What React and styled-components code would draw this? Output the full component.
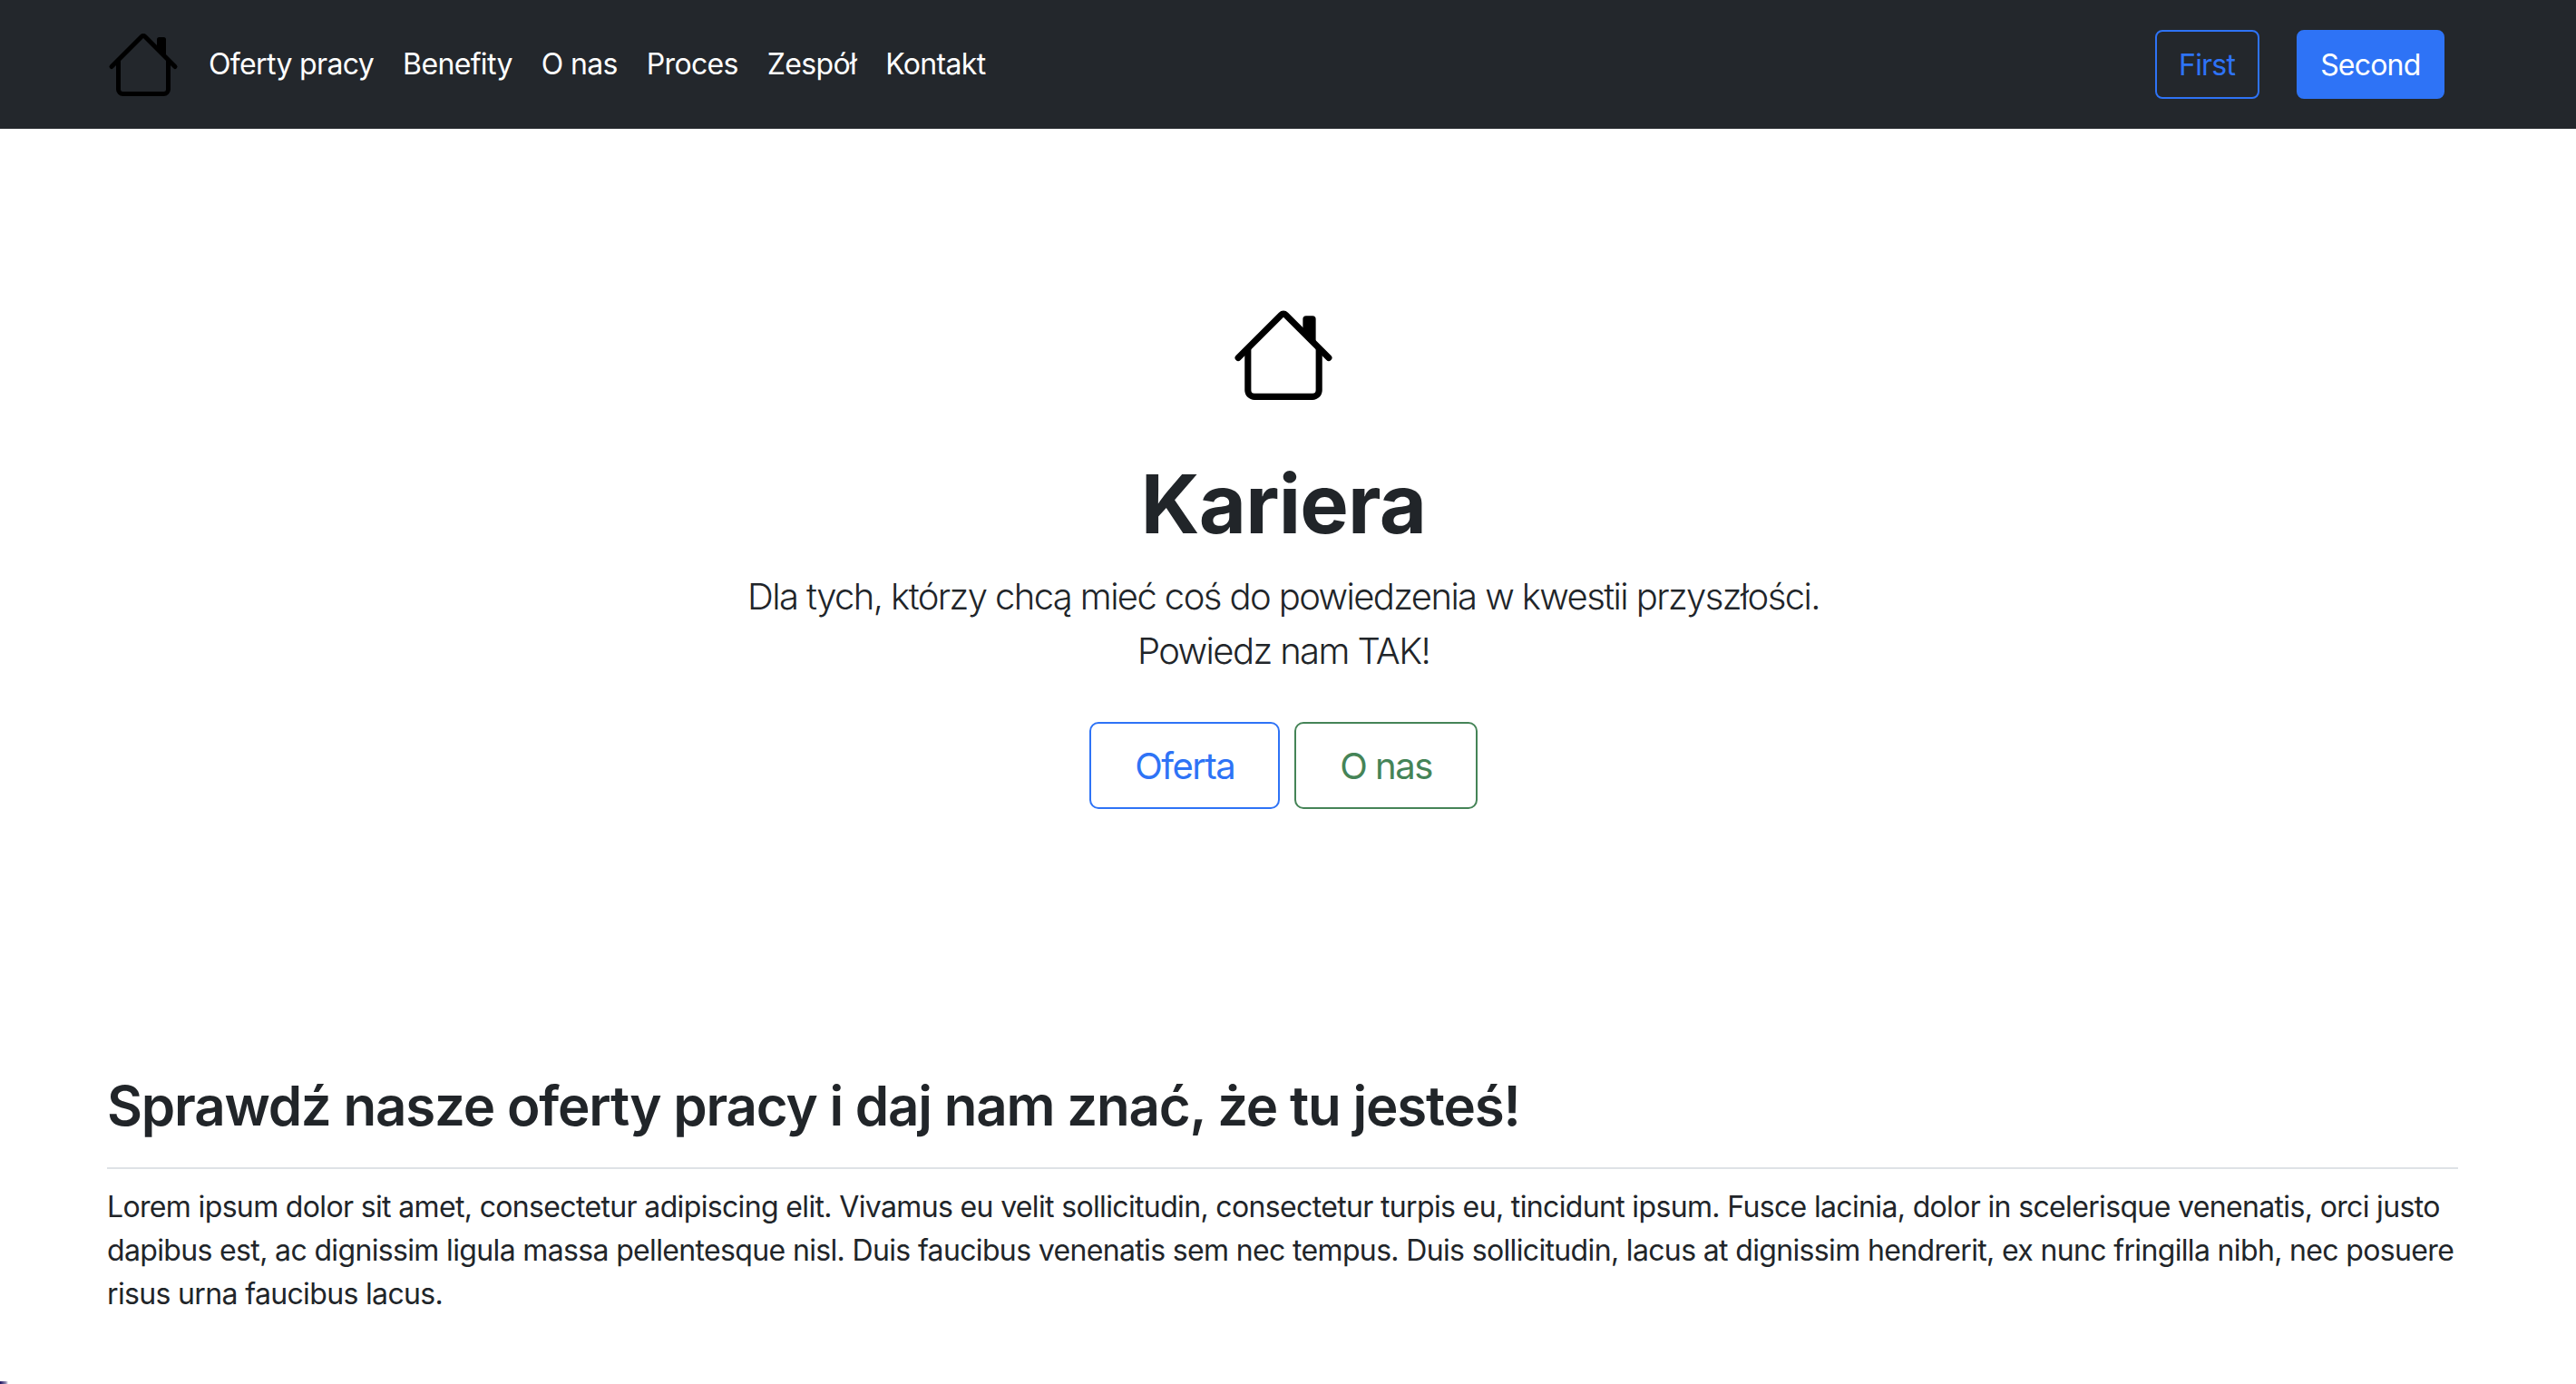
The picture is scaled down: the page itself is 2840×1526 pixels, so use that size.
import React from "react";
import styled, { createGlobalStyle } from "styled-components";

const Global = createGlobalStyle`
  html, body { margin: 0; padding: 0; background: #fff; }
  body { font-family: Inter, "Liberation Sans", sans-serif; color: #212529; }
  * { box-sizing: border-box; }
`;
const Page = styled.div`position: relative; width: 2840px; height: 1526px; overflow: hidden; background: #fff;`;
const Navbar = styled.header`
  height: 142px; background: #23272c; display: flex; align-items: center; justify-content: space-between;
  padding: 0 145px 0 118px;
`;
const NavLeft = styled.div`display: flex; align-items: center; gap: 32px;`;
const Brand = styled.div`display: flex; width: 80px; height: 80px; color: #000;`;
const NavLinks = styled.nav`display: flex; gap: 32px;`;
const NavLink = styled.a`font-size: 32px; line-height: 48px; color: #fff; letter-spacing: -0.65px;`;
const NavActions = styled.div`display: flex; gap: 41px;`;
const NavButton = styled.button`
  height: 76px; padding: 0 24.5px; border-radius: 8px; font: inherit; font-size: 32px; letter-spacing: -0.8px;
  border: 2px solid #2e73f6; color: ${p => p.$solid ? "#fff" : "#2e73f6"};
  background: ${p => p.$solid ? "#2e73f6" : "transparent"};
`;
const Hero = styled.section`display: flex; flex-direction: column; align-items: center; padding: 192px 129px 0 119px;`;
const HeroIcon = styled.div`display: flex; width: 114px; height: 114px; color: #000;`;
const Title = styled.h1`margin: 54px 0 0; font-size: 90px; line-height: 108px; font-weight: 700; letter-spacing: -0.8px;`;
const Lead = styled.p`margin: 18px 0 0; font-size: 40px; line-height: 60px; font-weight: 300; text-align: center; letter-spacing: -1.6px;`;
const HeroActions = styled.div`display: flex; gap: 16px; margin-top: 48px;`;
const HeroButton = styled.button`
  height: 96px; padding: 0 48px; border-radius: 10px; background: #fff; font: inherit; font-size: 40px; letter-spacing: -1.5px;
  color: ${p => p.$color}; border: 2px solid ${p => p.$color};
`;
const Section = styled.section`padding: 0 130px 0 118px; margin-top: 291px;`;
const Heading = styled.h2`margin: 0; font-size: 60px; line-height: 72px; font-weight: 600; letter-spacing: -1.2px;`;
const Divider = styled.hr`margin: 32px 0 0; border: 0; border-top: 2px solid #dee2e6;`;
const Body = styled.p`margin: 18px 0 0; font-size: 32px; line-height: 48px; letter-spacing: -0.65px;`;
const CornerMark = styled.div`
  position: absolute; left: 0; bottom: 0; width: 9px; height: 3px;
  background: linear-gradient(90deg, #1c1060, #8f8bb0 70%, transparent);
`;

const House = () => (
  <svg width="100%" height="100%" viewBox="0 0 16 16" fill="currentColor">
    <path fillRule="evenodd" d="M2 13.5V7h1v6.5a.5.5 0 0 0 .5.5h9a.5.5 0 0 0 .5-.5V7h1v6.5a1.5 1.5 0 0 1-1.5 1.5h-9A1.5 1.5 0 0 1 2 13.5zm11-11V6l-2-2V2.5a.5.5 0 0 1 .5-.5h1a.5.5 0 0 1 .5.5z" />
    <path fillRule="evenodd" d="M7.293 1.5a1 1 0 0 1 1.414 0l6.647 6.646a.5.5 0 0 1-.708.708L8 2.207 1.354 8.854a.5.5 0 1 1-.708-.708L7.293 1.5z" />
  </svg>
);

export default function App() {
  return (
    <Page>
      <Global />
      <Navbar>
        <NavLeft>
          <Brand><House /></Brand>
          <NavLinks>
            {["Oferty pracy", "Benefity", "O nas", "Proces", "Zespół", "Kontakt"].map(l => <NavLink key={l}>{l}</NavLink>)}
          </NavLinks>
        </NavLeft>
        <NavActions>
          <NavButton>First</NavButton>
          <NavButton $solid>Second</NavButton>
        </NavActions>
      </Navbar>
      <Hero>
        <HeroIcon><House /></HeroIcon>
        <Title>Kariera</Title>
        <Lead>Dla tych, którzy chcą mieć coś do powiedzenia w kwestii przyszłości.<br />Powiedz nam TAK!</Lead>
        <HeroActions>
          <HeroButton $color="#2e73f6">Oferta</HeroButton>
          <HeroButton $color="#458457">O nas</HeroButton>
        </HeroActions>
      </Hero>
      <Section>
        <Heading>Sprawdź nasze oferty pracy i daj nam znać, że tu jesteś!</Heading>
        <Divider />
        <Body>Lorem ipsum dolor sit amet, consectetur adipiscing elit. Vivamus eu velit sollicitudin, consectetur turpis eu, tincidunt ipsum. Fusce lacinia, dolor in scelerisque venenatis, orci justo dapibus est, ac dignissim ligula massa pellentesque nisl. Duis faucibus venenatis sem nec tempus. Duis sollicitudin, lacus at dignissim hendrerit, ex nunc fringilla nibh, nec posuere risus urna faucibus lacus.</Body>
      </Section>
      <CornerMark />
    </Page>
  );
}
